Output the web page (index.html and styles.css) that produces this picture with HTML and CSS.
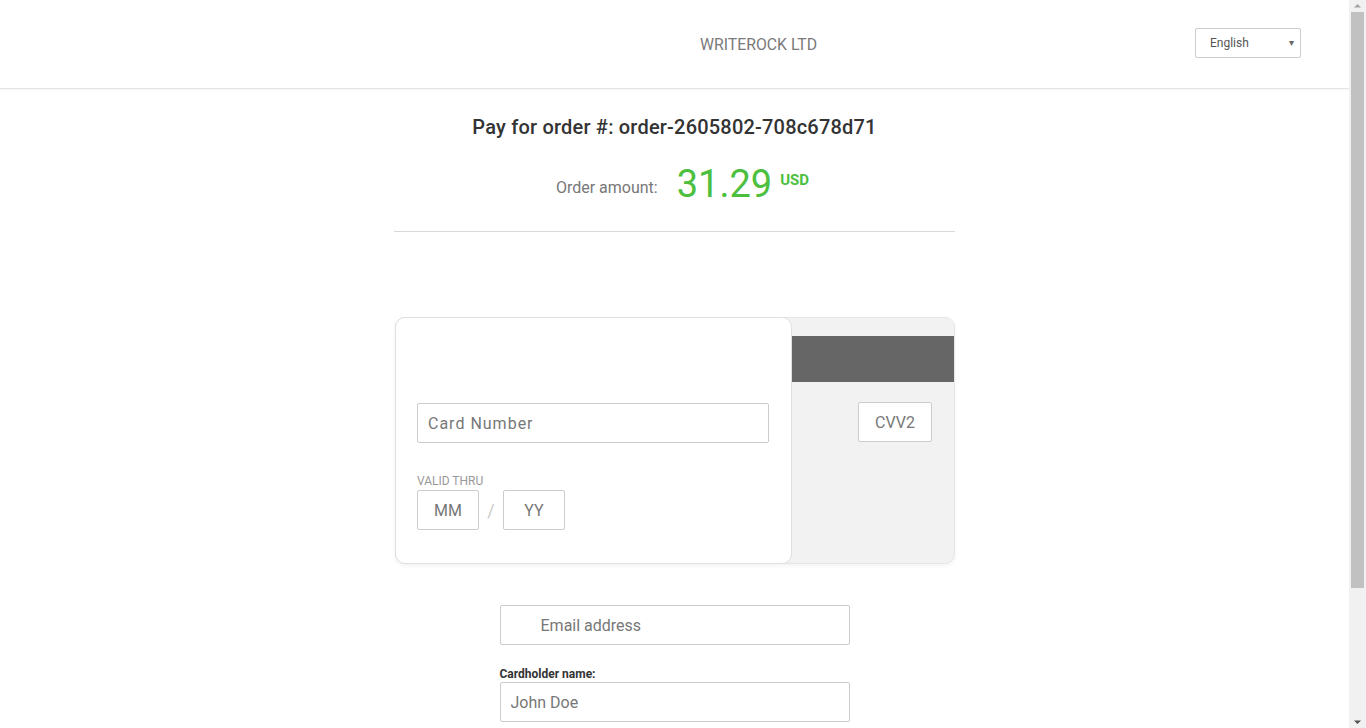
FILE: index.html
```html
<!DOCTYPE html>
<html lang="en">
<head>
<meta charset="utf-8">
<title>Pay for order</title>
<link rel="stylesheet" href="styles.css">
</head>
<body>
<header class="topbar">
  <div class="brand">WRITEROCK LTD</div>
  <div class="lang">
    <span class="lang-label">English</span>
    <span class="lang-caret">&#9662;</span>
  </div>
</header>
<main class="page">
  <section class="summary">
    <h1 class="order-title">Pay for order #: order-2605802-708c678d71</h1>
    <div class="amount-row">
      <span class="amount-label">Order amount:</span>
      <span class="amount-value">31.29</span>
      <span class="amount-cur">USD</span>
    </div>
  </section>
  <section class="card">
    <div class="card-front">
      <input class="field field-number" type="text" placeholder="Card Number">
      <div class="valid">
        <div class="valid-label">VALID THRU</div>
        <div class="valid-row">
          <input class="field field-date" type="text" placeholder="MM">
          <span class="slash">/</span>
          <input class="field field-date" type="text" placeholder="YY">
        </div>
      </div>
    </div>
    <div class="card-back">
      <div class="stripe"></div>
      <div class="cvv-row">
        <input class="field field-cvv" type="text" placeholder="CVV2">
      </div>
    </div>
  </section>
  <section class="extra">
    <input class="field field-wide field-email" type="text" placeholder="Email address">
    <label class="name-label">Cardholder name:</label>
    <input class="field field-wide" type="text" placeholder="John Doe">
  </section>
</main>
<div class="scrollbar" aria-hidden="true">
  <svg class="sb-arrow" width="17" height="12" viewBox="0 0 17 12"><path d="M5 7.5 L8.5 4 L12 7.5 Z" fill="#a3a3a3"/></svg>
  <div class="sb-track"><div class="sb-thumb"></div></div>
  <svg class="sb-arrow" width="17" height="12" viewBox="0 0 17 12"><path d="M5 4.5 L8.5 8 L12 4.5 Z" fill="#505050"/></svg>
</div>
</body>
</html>
```

FILE: styles.css
```css
::-webkit-scrollbar {
  display: none;
}

html {
  scrollbar-width: none;
}

* {
  box-sizing: border-box;
}

body {
  margin: 0 17px 0 0;
  font-family: Roboto, "Liberation Sans", Arial, sans-serif;
  color: #333;
  background: #fff;
}

.scrollbar {
  position: fixed;
  top: 0;
  right: 0;
  width: 17px;
  height: 100vh;
  background: #f1f1f1;
  display: flex;
  flex-direction: column;
}

.sb-arrow {
  display: block;
  flex: none;
}

.sb-track {
  flex: 1;
  padding: 0 2px;
}

.sb-thumb {
  height: 576px;
  background: #c1c1c1;
}

.topbar {
  height: 89px;
  display: flex;
  align-items: center;
  justify-content: space-between;
  padding: 0 48px 0 700px;
  border-bottom: 1px solid #e3e3e3;
  box-shadow: 0 1px 3px rgba(0, 0, 0, 0.04);
}

.brand {
  font-size: 15.8px;
  color: #7a7a7a;
  margin-top: 1px;
}

.lang {
  width: 106px;
  height: 30px;
  border: 1px solid #ccc;
  border-radius: 2px;
  display: flex;
  align-items: center;
  justify-content: space-between;
  padding: 0 6px 0 14px;
  font-size: 12px;
  color: #555;
  margin-top: -3px;
}

.lang-caret {
  font-size: 10px;
  color: #666;
}

.page {
  width: 561px;
  margin: 0 auto;
  padding-bottom: 170px;
}

.summary {
  border-bottom: 1px solid #d9d9d9;
  padding-top: 25px;
  padding-bottom: 26px;
  text-align: center;
}

.order-title {
  margin: 0;
  font-size: 20px;
  font-weight: 500;
  color: #333;
  line-height: 26px;
  letter-spacing: 0.2px;
}

.amount-row {
  display: flex;
  justify-content: center;
  align-items: flex-end;
  margin-top: 15px;
  height: 50px;
  padding-left: 16px;
}

.amount-label {
  font-size: 16px;
  line-height: 19px;
  color: #777;
  margin-right: 19px;
  margin-bottom: 8px;
}

.amount-value {
  font-size: 38px;
  color: #4cbf3e;
  line-height: 44px;
  margin-bottom: -1px;
}

.amount-cur {
  font-size: 15px;
  font-weight: 700;
  color: #4cbf3e;
  align-self: flex-start;
  line-height: 18px;
  margin-left: 8px;
  margin-top: 16px;
}

.card {
  margin-top: 85px;
  margin-left: 1px;
  width: 560px;
  height: 247px;
  display: flex;
  background: #f2f2f2;
  border: 1px solid #e6e6e6;
  border-radius: 10px;
  box-shadow: 0 2px 4px rgba(0, 0, 0, 0.05);
}

.card-front {
  width: 397px;
  margin: -1px 0 -1px -1px;
  background: #fff;
  border: 1px solid #e0e0e0;
  border-radius: 10px;
  padding: 85px 0 0 21px;
}

.card-back {
  flex: 1;
  padding-top: 18px;
}

.stripe {
  height: 46px;
  background: #666;
}

.cvv-row {
  display: flex;
  justify-content: flex-end;
  padding-right: 22px;
  margin-top: 20px;
}

.field {
  height: 40px;
  border: 1px solid #ccc;
  border-radius: 2px;
  background: #fff;
  font-family: Roboto, "Liberation Sans", Arial, sans-serif;
  font-size: 16px;
  color: #555;
  outline: none;
}

.field::placeholder {
  color: #777;
}

.field-number {
  width: 352px;
  padding: 0 10px;
  letter-spacing: 1px;
}

.field-cvv {
  width: 74px;
  text-align: center;
}

.valid {
  margin-top: 31px;
}

.valid-label {
  font-size: 12px;
  color: #999;
  line-height: 14px;
  margin-bottom: 2px;
}

.valid-row {
  display: flex;
  align-items: center;
}

.field-date {
  width: 62px;
  text-align: center;
}

.slash {
  width: 24px;
  text-align: center;
  color: #ccc;
  font-size: 18px;
}

.extra {
  width: 350px;
  margin: 41px auto 0;
  display: flex;
  flex-direction: column;
}

.field-wide {
  width: 350px;
  padding: 0 10px;
}

.field-email {
  padding-left: 40px;
}

.name-label {
  font-size: 12px;
  font-weight: 700;
  color: #333;
  margin-top: 22px;
  line-height: 14px;
  margin-bottom: 1px;
}
```
